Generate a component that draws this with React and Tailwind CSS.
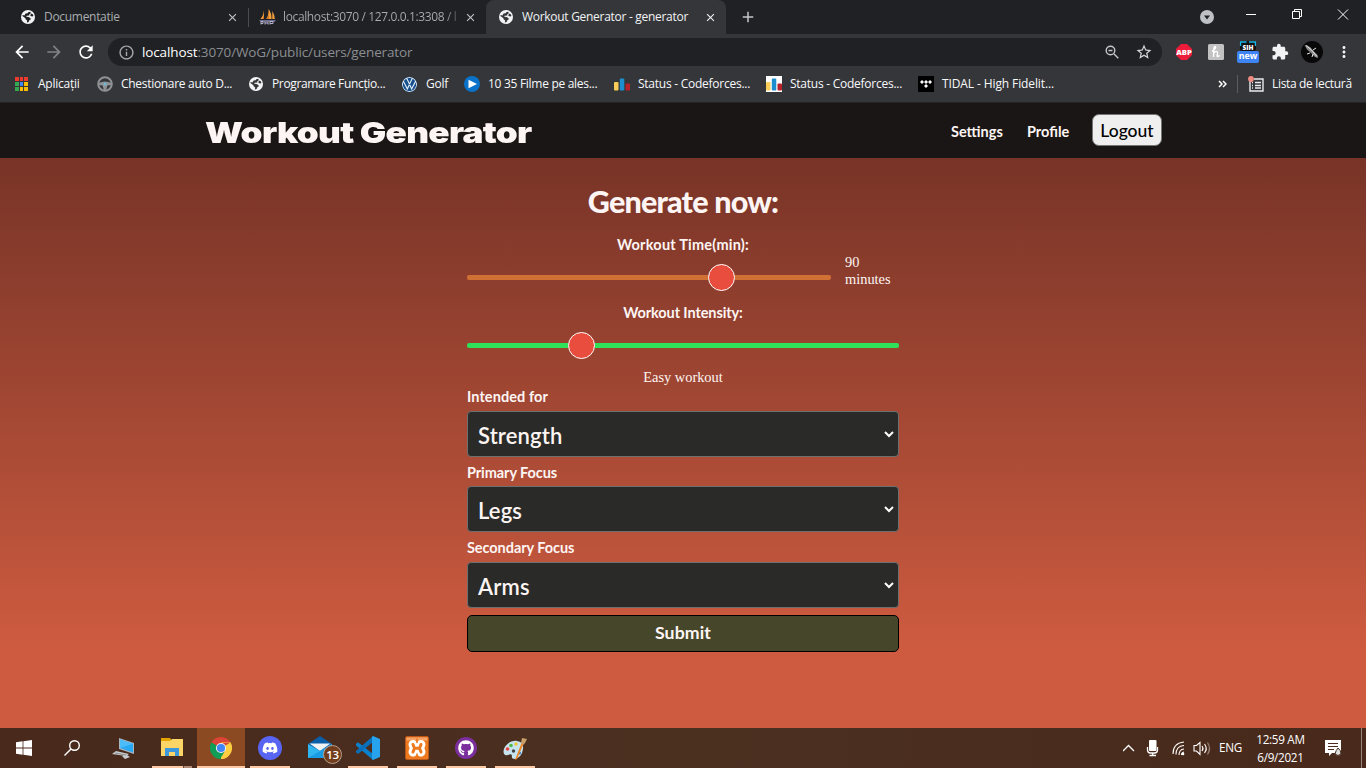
import React from "react";
import {
  MdArrowBack,
  MdArrowForward,
  MdRefresh,
  MdInfoOutline,
  MdStarBorder,
  MdExtension,
  MdMoreVert,
  MdClose,
  MdAdd,
} from "react-icons/md";
import { FaDiscord, FaGithub } from "react-icons/fa";
import { SiVolkswagen, SiTidal } from "react-icons/si";

const UI = "font-['Open_Sans','Noto_Sans',sans-serif]";
const BODY = "font-['Lato',sans-serif]";
const SERIF = "font-['Liberation_Serif',serif]";

function Globe({ cut = "#202124" }) {
  return (
    <svg viewBox="0 0 14 14" className="size-[14px] shrink-0">
      <circle cx="7" cy="7" r="7" fill="#f1f3f4" />
      <path
        d="M7.2 2.2 9.3 1.7 9.8 3.2 8.2 4.4 8.3 5.4 5.6 5.7 5.3 6.8 7.6 6.9 9.6 8.2 9.7 9.4 8.4 10 8 11.5 6.6 12.6 5.9 12.3 6.2 10.4 4.6 9.2 4.4 8.2 1.4 6.1 1.7 4.9 3.4 5.4 4.6 3.4 6.6 3.3ZM10.4 3.6 12 4.5 12.4 6 11.2 6.6 9.6 5.9 9.3 4.9Z"
        fill={cut}
      />
    </svg>
  );
}

function Sailboat() {
  return (
    <svg viewBox="0 0 17 16" className="h-4 w-[17px] shrink-0">
      <path d="M5 1v9H1.4Q4.500 7 5 1M9.600 0q3 4 3 10H7.200Q9.800 6 9.600 0M13.300 2q2.500 4 2.500 8h-2.500z" fill="#f7a13e" />
      <path d="M5 3v7H3.500Q5 7 5 3M9.800 2v8h-1.800Q10 6 9.800 2" fill="#c9701a" />
      <path d="M0 11h17l-1.500 2H1.500z" fill="#6f6b8e" />
      <path d="M2 15.500v-3h2v2H2m4 1v-3m0 1.500h3m0-1.500v3m2 0v-3h3v2h-3" fill="none" stroke="#b5b2cc" />
    </svg>
  );
}

function Wheel() {
  return (
    <svg viewBox="0 0 16 16" className="size-4 shrink-0" fill="none">
      <circle cx="8" cy="8" r="6.800" stroke="#8f9294" strokeWidth="2" />
      <path d="M1.500 7Q8 4 14.500 7v2l-4 .5L9 14.500H7L5.500 9.500l-4-.5z" fill="#8f9294" />
      <circle cx="8" cy="8" r="1.600" fill="#6fb6d6" />
    </svg>
  );
}

function Bars({ white }) {
  return (
    <svg viewBox="0 0 16 16" className="size-4 shrink-0">
      {white && <path d="M0 0h16v16H0z" fill="#fff" />}
      <rect x="0" y="6" width="4.500" height="8.500" rx="1" fill="#f9cd57" />
      <rect x="5.800" y="2.500" width="4.500" height="12" rx="1" fill="#1e8fce" />
      <rect x="11.500" y="7.500" width="4.500" height="7" rx="1" fill="#b7222b" />
    </svg>
  );
}

function Apps() {
  const colors = ["bg-[#f03a2e]", "bg-[#f03a2e]", "bg-[#f03a2e]", "bg-[#34a853]", "bg-[#4285f4]", "bg-[#fbbc04]", "bg-[#34a853]", "bg-[#fbbc04]", "bg-[#fbbc04]"];
  return (
    <div className="grid w-[13px] shrink-0 grid-cols-3 gap-x-[1px] gap-y-[1px]">
      {colors.map((c, i) => (
        <span key={i} className={`h-[4px] w-[3.500px] ${c}`} />
      ))}
    </div>
  );
}

function Tabs() {
  return (
    <div className="flex h-[34px] bg-[#202124] text-[12px] text-[#a9adb1]">
      <div className="flex w-[248px] items-center pl-[21px]">
        <Globe />
        <span className="ml-[9px] w-[182px] tracking-[-0.3px]">Documentatie</span>
        <MdClose className="size-[13px] text-[#c3c6ca]" />
      </div>
      <div className="mt-[8px] h-[19px] w-px bg-[#4a4c50]" />
      <div className="flex w-[237px] items-center pl-[10px]">
        <Sailboat />
        <span className="ml-[7px] w-[180px] whitespace-nowrap bg-linear-to-r from-[#a9adb1] from-90% to-[#303236] to-100% bg-clip-text tracking-[-0.37px] text-transparent">
          localhost:3070 / 127.0.0.1:3308 / l
        </span>
        <MdClose className="ml-[1px] size-[13px] shrink-0 text-[#c3c6ca]" />
      </div>
      <div className="flex w-[240px] items-center rounded-t-[8px] bg-[#35363a] pl-[13px] text-[#f1f3f4]">
        <Globe cut="#35363a" />
        <span className="ml-[9px] w-[182px] whitespace-nowrap tracking-[-0.29px]">Workout Generator - generator</span>
        <MdClose className="size-[13px] shrink-0" />
      </div>
      <div className="flex flex-1 items-center pl-[13px]">
        <MdAdd className="size-[18px] text-[#c3c6ca]" />
        <svg viewBox="0 0 14 14" className="ml-[443px] size-[14px]">
          <circle cx="7" cy="7" r="7" fill="#bdc1c6" />
          <path d="M4 5.500h6L7 9.500z" fill="#202124" />
        </svg>
      </div>
      <svg viewBox="0 0 120 34" className="h-[34px] w-[120px]" fill="none" stroke="#fff">
        <path d="M0 14.500h10M46.500 11.500h7v7h-7zM48.500 11.500v-2h7v7h-2M92 9.500l10 10M102 9.500l-10 10" />
      </svg>
    </div>
  );
}

function Toolbar() {
  return (
    <div className="flex h-[34px] items-center bg-[#35363a] pt-[2px]">
      <MdArrowBack className="ml-[12px] size-[20px] text-white" />
      <MdArrowForward className="ml-[12px] size-[20px] text-[#808286]" />
      <MdRefresh className="ml-[12px] size-[20px] text-white" />
      <div className="ml-[12px] flex h-[28px] w-[1054px] items-center rounded-full bg-[#202124] pl-[10px]">
        <MdInfoOutline className="size-[17px] text-[#a6a9ad]" />
        <span className="ml-[7px] w-[963px] text-[13.500px] tracking-[-0.13px] text-[#8b8e92]">
          <span className="text-white">localhost</span>:3070/WoG/public/users/generator
        </span>
        <svg viewBox="0 0 14 14" className="size-[14px]" fill="none" stroke="#c3c6ca" strokeWidth="1.400">
          <circle cx="5.500" cy="5.500" r="4.300" />
          <path d="M9 9l4.300 4.300M3.500 5.500h4" />
        </svg>
        <MdStarBorder className="ml-[16px] size-[18px] text-[#d5d7da]" />
      </div>
      <svg viewBox="0 0 16 16" className="ml-[14px] size-4">
        <path d="M5 0h6l5 5v6l-5 5H5l-5-5V5z" fill="#ee1b3b" />
        <text x="8" y="10.900" textAnchor="middle" fontSize="7.700" fontWeight="800" fill="#fff" className={UI}>ABP</text>
      </svg>
      <svg viewBox="0 0 16 16" className="ml-[16px] size-4">
        <rect width="16" height="16" rx="1.500" fill="#c2c2c2" />
        <path d="M4 7.500Q8.500 4 7.500 2.600 6 2 5.800 6l-.3 7M5.600 9.500Q7.500 6.500 9.200 7.800q1 1-.2 4 0 1.500 2.800-.3" fill="none" stroke="#fff" strokeWidth="1.400" />
      </svg>
      <div className="ml-[13px] flex h-[22px] w-[22px] flex-col items-center">
        <svg viewBox="0 0 16 10" className="h-[10px] w-4 overflow-visible">
          <rect width="16" height="10" rx="2" fill="#111" />
          <path d="M.6 5V1h6M9 1h6.400v4" fill="none" stroke="#16b7e8" strokeWidth="1.300" />
          <text x="8" y="9" textAnchor="middle" fontSize="6.500" fontWeight="800" fill="#fff" className={UI}>SIH</text>
        </svg>
        <span className="flex h-[12px] w-[22px] items-center justify-center rounded-[2px] bg-[#3f84f5] pb-px text-[8.800px] font-bold leading-[11px] text-white">new</span>
      </div>
      <MdExtension className="ml-[12px] size-[18px] text-[#f1f3f4]" />
      <svg viewBox="0 0 22 22" className="ml-[12px] size-[22px]">
        <circle cx="11" cy="11" r="11" fill="#080808" />
        <path d="M3.500 4l3 .5 3 2 3 3.500 4 4 .5 3-3-1-4-4-4-3.500z" fill="#8a8a8a" />
        <path d="M5 4.500l5 4 6 7M9 12l-3 1M12 13l-1 3M12 9l3-2" stroke="#e4e4e4" strokeWidth="1" fill="none" />
      </svg>
      <MdMoreVert className="ml-[12px] size-[18px] text-[#f1f3f4]" />
    </div>
  );
}

function Mark({ icon, width, gap, text, tracking = "" }) {
  return (
    <div className={`flex items-center whitespace-nowrap ${width}`}>
      {icon}
      <span className={`${gap} ${tracking}`}>{text}</span>
    </div>
  );
}

function Bookmarks() {
  return (
    <div className="flex h-[34px] items-center bg-[#35363a] pb-[2px] pl-[15px] text-[12px] tracking-[-0.25px] text-[#f8f9fa]">
      <Mark icon={<Apps />} width="w-[82px]" gap="ml-[10px]" text="Aplicații" />
      <Mark icon={<Wheel />} width="w-[152px]" gap="ml-[8px]" text="Chestionare auto D..." tracking="tracking-[-0.3px]" />
      <Mark icon={<Globe cut="#35363a" />} width="w-[153px]" gap="ml-[9px]" text="Programare Funcțio..." tracking="tracking-[-0.35px]" />
      <Mark icon={<SiVolkswagen className="size-[15px] rounded-full bg-[#174f8c] text-[#e4eef7]" />} width="w-[62px]" gap="ml-[9px]" text="Golf" />
      <Mark
        icon={
          <svg viewBox="0 0 16 16" className="size-4">
            <circle cx="8" cy="8" r="8" fill="#0a72c8" />
            <path d="M4.500 3.800 13 8l-8.500 4.200z" fill="#fff" />
          </svg>
        }
        width="w-[150px]"
        gap="ml-[8px]"
        text="10 35 Filme pe ales..."
        tracking="tracking-[-0.29px]"
      />
      <Mark icon={<Bars />} width="w-[152px]" gap="ml-[8px]" text="Status - Codeforces..." />
      <Mark icon={<Bars white />} width="w-[152px]" gap="ml-[8px]" text="Status - Codeforces..." />
      <Mark
        icon={
          <span className="flex size-4 items-center justify-center bg-black">
            <SiTidal className="size-[12px] text-white" />
          </span>
        }
        width="w-[300px]"
        gap="ml-[8px]"
        text="TIDAL - High Fidelit..."
        tracking="tracking-[-0.11px]"
      />
      <svg viewBox="0 0 9 8" className="h-2 w-[9px]" fill="none" stroke="#fff" strokeWidth="1.500">
        <path d="M1 1l3 3-3 3M5 1l3 3-3 3" />
      </svg>
      <span className="ml-[10px] h-[18px] w-px bg-[#5a5c60]" />
      <svg viewBox="0 0 16 16" className="ml-[10px] size-4" fill="none" stroke="#e8eaed" strokeWidth="1.400">
        <path d="M2 5v10h13V3H6M7 6.500h6M7 9.500h6M7 12h6M4 6.500h1M4 9.500h1M4 12h1" />
        <circle cx="3" cy="3" r="2.900" fill="#f28b82" stroke="none" />
      </svg>
      <span className="ml-[8px] whitespace-nowrap tracking-[-0.33px]">Lista de lectură</span>
    </div>
  );
}

function Nav() {
  return (
    <nav className={`flex h-[55px] shrink-0 items-center bg-[#1a1615] pl-[205px] ${BODY}`}>
      <div className="w-[746px]">
        <span className="inline-block origin-left scale-x-[1.213] whitespace-nowrap pt-[6px] font-['Inter',sans-serif] text-[29px] font-black leading-none tracking-[-0.6px] text-[#fdf5f3]">
          Workout Generator
        </span>
      </div>
      <span className="w-[76px] pt-[3px] text-[14.500px] font-bold text-[#fdf5f3]">Settings</span>
      <span className="w-[65px] pt-[3px] text-[14.500px] font-bold text-[#fdf5f3]">Profile</span>
      <button className="mb-[2px] flex h-[32px] w-[70px] items-center justify-center rounded-[7px] border border-[#767676] bg-[#efefef] pt-[4px] text-[17.500px] font-medium text-black">
        Logout
      </button>
    </nav>
  );
}

function Slider({ track, lead }) {
  return (
    <div className={`flex h-[27px] items-center ${track === "time" ? "w-[364px]" : "w-[432px]"}`}>
      <div className={`h-[5px] rounded-l-[2px] ${lead} ${track === "time" ? "bg-[#d07035]" : "bg-[#2fe158]"}`} />
      <div className="size-[27px] shrink-0 rounded-full border border-white bg-[#e94d3d]" />
      <div className={`h-[5px] flex-1 rounded-r-[2px] ${track === "time" ? "bg-[#d07035]" : "bg-[#2fe158]"}`} />
    </div>
  );
}

function Field({ label, value, rowClass, labelClass }) {
  return (
    <div className={`flex flex-col ${rowClass}`}>
      <label className={`text-[14.500px] font-bold leading-[20px] ${labelClass}`}>{label}</label>
      <div className="flex h-[46px] items-center justify-between rounded-[4px] border border-[#6e7070] bg-[#2a2b28] pl-[10px] pr-[4px] text-[22px] font-semibold tracking-[0.15px]">
        <span className="pt-[2px]">{value}</span>
        <svg viewBox="0 0 10 7" className="h-[7px] w-[10px]" fill="none" stroke="#fff" strokeWidth="2">
          <path d="M1 1l4 4 4-4" />
        </svg>
      </div>
    </div>
  );
}

function Generator() {
  return (
    <main className={`flex h-[570px] shrink-0 flex-col items-center bg-linear-to-b from-[#783427] from-0% to-[#ce5b40] to-86% text-[#fdf5f3] ${BODY}`}>
      <h1 className="mt-[23px] h-[52px] text-[30.500px] font-black leading-[40px] tracking-[-0.8px]">Generate now:</h1>
      <div className="flex w-[432px] flex-col">
        <label className="h-[24px] text-center text-[14.500px] font-bold leading-[24px] tracking-[0.22px]">Workout Time(min):</label>
        <div className="flex h-[44px] pt-[7px]">
          <Slider track="time" lead="w-[241px]" />
          <div className={`ml-[14px] -mt-[10px] w-[54px] text-[14.400px] leading-[17px] ${SERIF}`}>90 minutes</div>
        </div>
        <label className="h-[24px] text-center text-[14.500px] font-bold leading-[24px] tracking-[-0.1px]">Workout Intensity:</label>
        <div className="flex h-[44px] pt-[7px]">
          <Slider track="intensity" lead="w-[101px]" />
        </div>
        <p className={`h-[18px] text-center text-[14.400px] leading-[17px] ${SERIF}`}>Easy workout</p>
        <Field label="Intended for" value="Strength" rowClass="h-[76px]" labelClass="h-[24px] tracking-[0.08px]" />
        <Field label="Primary Focus" value="Legs" rowClass="h-[75px]" labelClass="h-[23px] tracking-[-0.08px]" />
        <Field label="Secondary Focus" value="Arms" rowClass="h-[77px]" labelClass="h-[24px] tracking-[-0.06px]" />
        <button className="h-[37px] rounded-[5px] border border-black bg-[#46462a] text-[17.700px] font-bold tracking-[0.1px]">Submit</button>
      </div>
    </main>
  );
}

function Task({ width = "w-[49px]", line, active, children }) {
  return (
    <div className={`flex h-[40px] flex-col items-center ${width}`}>
      <div className={`flex h-[38px] w-full items-center justify-center pt-[2px] ${active ? "bg-[#8b4a22]" : ""}`}>{children}</div>
      {line && <div className={`h-[2px] ${active ? "w-full" : "w-[40px]"} bg-[#fdc9a5]`} />}
    </div>
  );
}

function Taskbar() {
  return (
    <footer className="flex h-[40px] shrink-0 items-center bg-linear-to-r from-[#48291b] via-[#4b3020] to-[#48291b] text-white">
      <Task width="w-[48px]">
        <svg viewBox="0 0 16 16" className="size-4" fill="#fff">
          <path d="M0 2.200 6.600 1.300v6.200H0zM7.400 1.200 16 0v7.500H7.400zM0 8.400h6.600v6.300L0 13.800zM7.400 8.400H16V16l-8.600-1.200z" />
        </svg>
      </Task>
      <Task width="w-[48px]">
        <svg viewBox="0 0 16 16" className="size-4" fill="none" stroke="#fff" strokeWidth="1.400">
          <circle cx="10.500" cy="5.500" r="4.800" />
          <path d="M7 9 .5 15.500" />
        </svg>
      </Task>
      <Task width="w-[54px]">
        <svg viewBox="0 0 22 21" className="h-[21px] w-[22px]">
          <path d="m7 0 15 5v11L7 11z" fill="#a9b6c0" />
          <path d="m8 1.500 13 4.300v8.800L8 10z" fill="#29a8f4" />
          <path d="m8 1.500 13 4.300L8 10z" fill="#4cbcfa" />
          <path d="m4 13 13 3-3 2L0 16zM10 18l5-1 3 2-5 2z" fill="#c9cdd0" />
          <path d="m3 15 11 2" stroke="#8a8a8a" />
        </svg>
      </Task>
      <div className="flex h-[40px] w-[47px] flex-col">
        <div className="flex h-[38px] items-center pl-[11px]">
          <svg viewBox="0 0 22 19" className="h-[19px] w-[22px]">
            <path d="M0 0h9l2 3h11v15H0z" fill="#e5a500" />
            <path d="M0 3h9l2-2h11v17H0z" fill="#fdd566" />
            <path d="M4 18v-8h14v8h-4v-4H8v4z" fill="#3d99dc" />
          </svg>
        </div>
        <div className="flex h-[2px] pl-[2px]">
          <span className="w-[31px] bg-[#fdc9a5]" />
          <span className="w-px bg-[#6b4a38]" />
          <span className="w-[8px] bg-[#b18b74]" />
        </div>
      </div>
      <Task width="w-[48px]" line active>
        <svg viewBox="0 0 22 22" className="size-[22px]">
          <path d="M11 11 1.470 5.500A11 11 0 0 1 20.530 5.500z" fill="#dc4437" />
          <path d="M11 11 20.530 5.500A11 11 0 0 1 11 22z" fill="#ffcd40" />
          <path d="M11 11V22A11 11 0 0 1 1.470 5.500z" fill="#109d58" />
          <path d="M11 6h9.800l-.27-.5H11zM15.300 13.500 11 22l4-.8 2-6z" fill="#ffcd40" />
          <path d="M15.300 13.500 10 22 1.470 5.500 6.700 13.500z" fill="#109d58" />
          <circle cx="11" cy="11" r="5.100" fill="#f1f1f1" />
          <circle cx="11" cy="11" r="4.100" fill="#4285f4" />
        </svg>
      </Task>
      <Task width="w-[50px]" line>
        <span className="flex size-[24px] items-center justify-center rounded-full bg-[#5865f2]">
          <FaDiscord className="size-[16px]" />
        </span>
      </Task>
      <Task width="w-[48px]">
        <div className="relative ml-[2px] h-[24px] w-[24px]">
          <svg viewBox="0 0 24 23" className="h-[23px] w-[24px]">
            <path d="M0 8 12 0l12 8v14H0z" fill="#0b5ea8" />
            <path d="M1.500 7.500h21L12 15z" fill="#f2f2f2" />
            <path d="m0 8 12 7L24 8v14H0z" fill="#31b5ee" />
            <path d="m0 22 24-14v14z" fill="#1a9ce4" />
          </svg>
          <span className={`absolute left-[15px] top-[9px] flex size-[19px] items-center justify-center rounded-full border border-[#b6a08f] bg-[#713d1c] text-[11.500px] font-semibold tracking-[-0.3px] ${UI}`}>13</span>
        </div>
      </Task>
      <Task line>
        <svg viewBox="0 0 24 24" className="size-[24px]">
          <path d="m0 8 2-1.700L17 18v6L0 9.500z" fill="#0b80cc" />
          <path d="M17 0v6L2 18l-2-1.700V15z" fill="#0a6fb8" />
          <path d="m17 0 7 3v18l-7 3-1-1V1z" fill="#27a3ee" />
        </svg>
      </Task>
      <Task line>
        <svg viewBox="0 0 24 24" className="size-[24px]" fill="none" strokeLinecap="round" strokeLinejoin="round">
          <rect x=".5" y=".5" width="23" height="23" rx="1.500" fill="#ee7a20" stroke="#b9561a" />
          <path d="M1.500 1.500h21v3h-21z" fill="#f6a468" />
          <path d="M8 8.500l1.500 3.700L8 16M16 8.500l-1.500 3.700L16 16M9.500 12.200h5" stroke="#fff" strokeWidth="9" />
          <path d="M12 3v3.500M12 18v3.500" stroke="#ee7a20" strokeWidth="1.600" />
          <path d="M8 8.500l1.500 3.700L8 16M16 8.500l-1.500 3.700L16 16M9.500 12.200h5" stroke="#ee7a20" strokeWidth="3" />
        </svg>
      </Task>
      <Task line>
        <span className="flex size-[22px] items-center justify-center rounded-full bg-[#7a2f9d]">
          <FaGithub className="size-[16px]" />
        </span>
      </Task>
      <Task line>
        <svg viewBox="0 0 24 23" className="h-[23px] w-[24px]">
          <path d="M.5 14.500C1 8 8 3 14 4q7 1 6 8-1 8-8 10-4 0-3-3 0-3-4-1-4.500 1-4.500-3.500" fill="#c7e3f0" />
          <circle cx="4.500" cy="12" r="1.800" fill="#e6453d" />
          <circle cx="8" cy="8.500" r="1.800" fill="#52b947" />
          <circle cx="13" cy="7" r="1.800" fill="#f4c536" />
          <circle cx="10.500" cy="14" r="1.700" fill="#444" />
          <circle cx="16.500" cy="16" r="1.600" fill="#397fc5" />
          <path d="M18.500 6 20.500 7 14 22l-2 1z" fill="#ee8623" />
          <path d="m18 6 1-5 5 1-2 4-2 2z" fill="#c99f6c" />
        </svg>
      </Task>
      <svg viewBox="0 0 90 24" className="ml-[584px] h-6 w-[90px]" fill="none" stroke="#fff" strokeWidth="1.300">
        <path d="m0 15 5.500-5.500L11 15" />
        <rect x="26" y="4" width="7.500" height="11" rx="1" fill="#fff" stroke="none" />
        <path d="M24.500 11v3q0 3 3 3h4q3 0 3-3v-3M29.700 17v3M26.500 19.500h6.500" />
        <path d="M50 18Q50 7 61 6M53 18.500Q53 10 61 9.500M56 19q0-5.500 5-6M58.500 19q0-2.500 2.500-3" strokeWidth="1.100" />
        <circle cx="60" cy="18" r="1.300" fill="#fff" stroke="none" />
        <path d="M71 9.500h2.500l3.500-3v12l-3.500-3.500H71zM79 10q2 2.500 0 5M81.500 8q3.500 4.500 0 9" strokeWidth="1.100" />
        <path d="M84.500 6.500q4 6 0 12" stroke="#947f74" />
      </svg>
      <span className="ml-[6px] w-[38px] text-[11.700px] tracking-[-0.3px]">ENG</span>
      <div className="flex w-[47px] flex-col items-center whitespace-nowrap text-[11.700px] leading-[18px] tracking-[-0.3px] -mt-px">
        <span>12:59 AM</span>
        <span>6/9/2021</span>
      </div>
      <svg viewBox="0 0 17 17" className="ml-[21px] size-[17px]">
        <path d="M0 0h16v13H7l-3 3v-3H0z" fill="#fff" />
        <path d="M3 3.500h10M3 6.500h10M3 9.500h6" stroke="#4b2e1f" strokeWidth="1.200" />
        <path d="M10 14q1-4 3-6 3 2 3 6-3 3-6 0" fill="#ddd" stroke="#4b2e1f" />
      </svg>
      <span className="ml-[19px] h-full w-px bg-[#94857b]" />
    </footer>
  );
}

export default function App() {
  return (
    <div className="h-[773px] w-[1370px] overflow-hidden bg-white">
      <div className={`flex h-[768px] w-[1366px] flex-col overflow-hidden ${UI}`}>
        <header className="h-[103px] shrink-0 border-b border-[#242426] bg-[#35363a]">
          <Tabs />
          <Toolbar />
          <Bookmarks />
        </header>
        <Nav />
        <Generator />
        <Taskbar />
      </div>
    </div>
  );
}
